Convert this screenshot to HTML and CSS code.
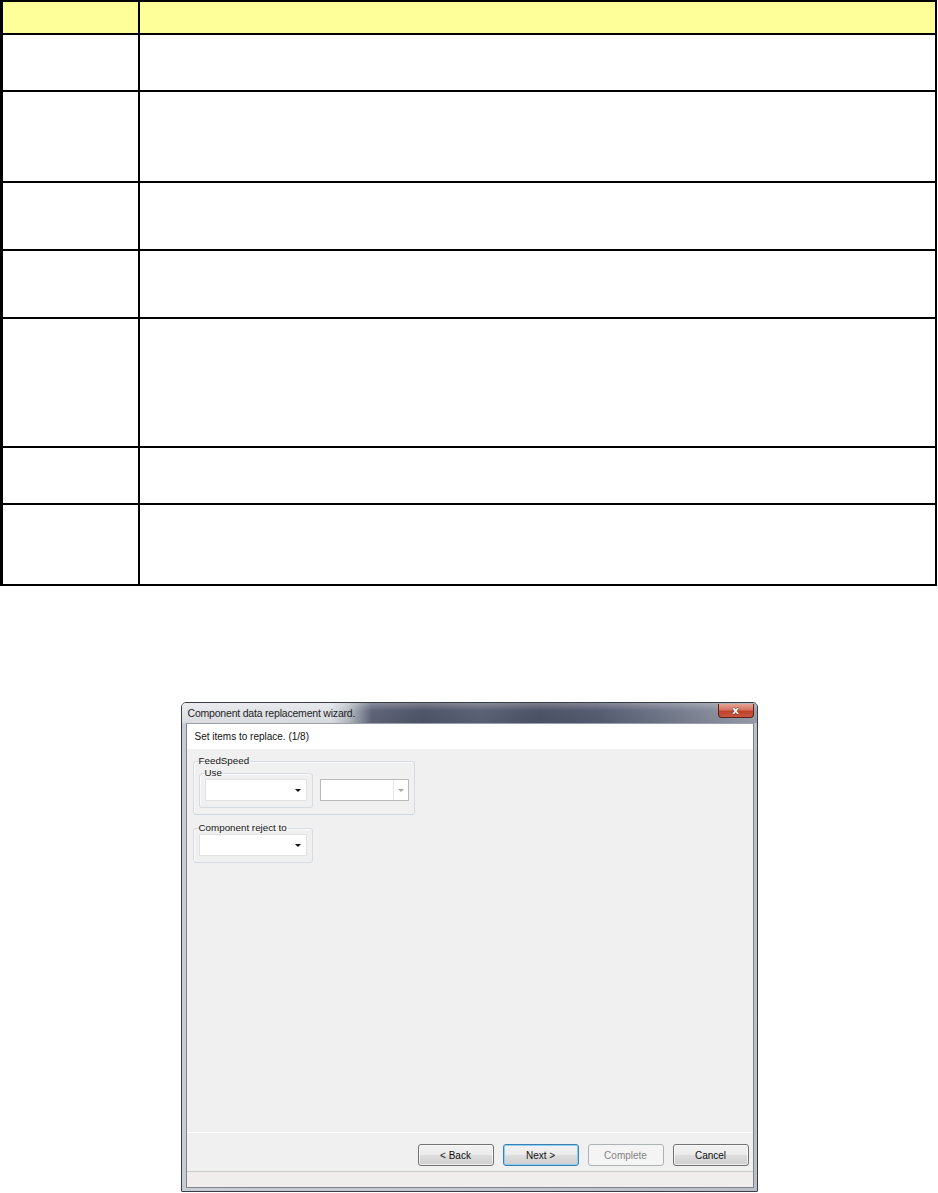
FILE: index.html
```html
<!DOCTYPE html>
<html>
<head>
<meta charset="utf-8">
<link rel="stylesheet" href="styles.css">
</head>
<body>
<div class="spec">
  <div class="row head"><div class="c1"></div><div class="c2"></div></div>
  <div class="row r1"><div class="c1"></div><div class="c2"></div></div>
  <div class="row r2"><div class="c1"></div><div class="c2"></div></div>
  <div class="row r3"><div class="c1"></div><div class="c2"></div></div>
  <div class="row r4"><div class="c1"></div><div class="c2"></div></div>
  <div class="row r5"><div class="c1"></div><div class="c2"></div></div>
  <div class="row r6"><div class="c1"></div><div class="c2"></div></div>
  <div class="row r7"><div class="c1"></div><div class="c2"></div></div>
</div>

<div class="dialog">
  <div class="titlebar">
    <span class="title">Component data replacement wizard.</span>
    <span class="close"><span class="x">x</span></span>
  </div>
  <div class="client">
    <div class="step">Set items to replace. (1/8)</div>
    <div class="content">
      <fieldset class="group feed">
        <legend>FeedSpeed</legend>
        <div class="feedrow">
          <fieldset class="group use">
            <legend>Use</legend>
            <div class="combo w102"><span class="arrow"></span></div>
          </fieldset>
          <div class="combo disabled"><span class="sep"></span><span class="arrow"></span></div>
        </div>
      </fieldset>
      <fieldset class="group reject">
        <legend>Component reject to</legend>
        <div class="combo w108"><span class="arrow"></span></div>
      </fieldset>
    </div>
    <div class="buttons">
      <button class="btn">&lt; Back</button>
      <button class="btn default">Next &gt;</button>
      <button class="btn off">Complete</button>
      <button class="btn">Cancel</button>
    </div>
    <div class="status"></div>
  </div>
</div>
</body>
</html>
```

FILE: styles.css
```css
html, body {
  margin: 0;
  padding: 0;
  background: #ffffff;
}
body {
  width: 938px;
  height: 1193px;
  overflow: hidden;
  font-family: "Liberation Sans", Arial, sans-serif;
}

/* ---------- spec table ---------- */
.spec {
  width: 937px;
  box-sizing: border-box;
  border-top: 2px solid #000;
  border-left: 3px solid #000;
  border-right: 2px solid #000;
  border-bottom: 2px solid #000;
}
.row {
  display: flex;
  border-bottom: 2px solid #000;
}
.row.r7 { border-bottom: 0; }
.c1 {
  width: 135px;
  flex: none;
  border-right: 2px solid #000;
}
.c2 { flex: 1; }
.head { height: 31px; background: #ffff99; }
.r1 { height: 55px; }
.r2 { height: 89px; }
.r3 { height: 66px; }
.r4 { height: 66px; }
.r5 { height: 127px; }
.r6 { height: 55px; }
.r7 { height: 79px; }

/* ---------- dialog ---------- */
.dialog {
  width: 577px;
  height: 490px;
  box-sizing: border-box;
  margin: 116px auto 0;
  border: 1px solid #3a3d44;
  border-radius: 5px 5px 1px 1px;
  padding: 0 3px 3px 4px;
  background: linear-gradient(to right, #c9cdd3 0%, #c6cad0 40%, #b9bec7 100%);
  display: flex;
  flex-direction: column;
}
.titlebar {
  height: 20px;
  margin: 0 -3px 0 -4px;
  padding: 0 3px 0 4px;
  display: flex;
  align-items: center;
  justify-content: space-between;
  border-radius: 4px 4px 0 0;
  background:
    linear-gradient(to bottom, rgba(255,255,255,0.25), rgba(255,255,255,0) 40%, rgba(0,0,0,0.04)),
    linear-gradient(to right, #e4e6e9 0%, #dfe2e6 26%, #b8bcc5 29%, #5f6578 33%, #4f5569 42%, #5b6276 52%, #4d5367 62%, #555c71 72%, #6c7386 82%, #858b9a 92%, #9ba0ac 100%);
}
.title {
  font-size: 10.5px;
  color: #1e1e1e;
  padding-left: 2px;
  letter-spacing: -0.2px;
}
.close {
  width: 36px;
  height: 14px;
  margin-top: -5px;
  margin-right: 0;
  box-sizing: border-box;
  border: 1px solid #5a2318;
  border-top: 0;
  border-radius: 0 0 4px 4px;
  background: linear-gradient(to bottom, #e5a294 0%, #d47664 45%, #c0412b 55%, #c9553e 100%);
  display: flex;
  align-items: center;
  justify-content: center;
}
.x {
  color: #fff;
  font-family: "DejaVu Sans", sans-serif;
  font-weight: bold;
  font-size: 11px;
  line-height: 11px;
  text-shadow: 0 0 1px #3a0d05, 0 0 1px #3a0d05;
}

.client {
  flex: 1;
  border: 1px solid #7f838b;
  border-top-color: #9aa0a8;
  background: #f0f0f0;
  display: flex;
  flex-direction: column;
  font-size: 10px;
  color: #111;
}
.step {
  height: 25px;
  flex: none;
  background: #ffffff;
  padding-left: 8px;
  display: flex;
  align-items: center;
  font-size: 10px;
}
.content {
  flex: 1;
  padding: 6px 0 0 6px;
  display: flex;
  flex-direction: column;
  align-items: flex-start;
}

/* group boxes */
.group {
  margin: 0;
  padding: 0 5px 6px 5px;
  border: 1px solid #d5dbe0;
  border-radius: 3px;
  box-shadow: inset 1px 1px 0 #fafafa;
  min-width: 0;
  box-sizing: border-box;
}
.group legend {
  padding: 0 1px;
  margin-left: -1px;
  font-size: 9.8px;
  line-height: 12px;
  color: #151515;
}
.feed {
  width: 222px;
  border-bottom-color: #c9d7e6;
}
.feedrow {
  display: flex;
  align-items: flex-start;
  gap: 7px;
}
.use { width: 114px; }
.reject {
  width: 120px;
  margin-top: 7px;
}

/* combo boxes */
.combo {
  height: 22px;
  box-sizing: border-box;
  background: #ffffff;
  border: 1px solid #e2e2e2;
  display: flex;
  justify-content: flex-end;
  align-items: center;
  padding-right: 5px;
}
.w102 { width: 102px; }
.w108 { width: 108px; }
.arrow {
  width: 0;
  height: 0;
  border-left: 3px solid transparent;
  border-right: 3px solid transparent;
  border-top: 3px solid #111;
}
.combo.disabled {
  width: 89px;
  margin-top: 12px;
  border-color: #b9b9b9;
  padding-right: 4px;
}
.combo.disabled .sep {
  width: 1px;
  height: 20px;
  background: #e6e6e6;
  margin-right: 4px;
}
.combo.disabled .arrow { border-top-color: #a8a8a8; }

/* buttons */
.buttons {
  height: 40px;
  flex: none;
  box-sizing: border-box;
  border-top: 1px solid #ffffff;
  border-bottom: 1px solid #c8c8c8;
  padding: 11px 4px 0 0;
  display: flex;
  justify-content: flex-end;
  align-items: flex-start;
  gap: 9px;
}
.btn {
  width: 76px;
  height: 22px;
  margin: 0;
  padding: 0;
  border: 1px solid #707070;
  border-radius: 3px;
  background: linear-gradient(to bottom, #f2f2f2 0%, #ebebeb 48%, #dddddd 52%, #cfcfcf 100%);
  box-shadow: inset 0 0 0 1px rgba(255,255,255,0.7);
  font-family: "Liberation Sans", Arial, sans-serif;
  font-size: 10px;
  color: #111;
}
.btn.default {
  border-color: #3c7fb1;
  background: linear-gradient(to bottom, #f2f2f2 0%, #ebebeb 48%, #dddddd 52%, #cfcfcf 100%);
  box-shadow: inset 0 0 0 1px #8bd0f4;
}
.btn.off {
  border-color: #adb2b5;
  background: #f4f4f4;
  box-shadow: none;
  color: #838383;
}
.status {
  flex: none;
  height: 15px;
  background: #f0eded;
}
```
